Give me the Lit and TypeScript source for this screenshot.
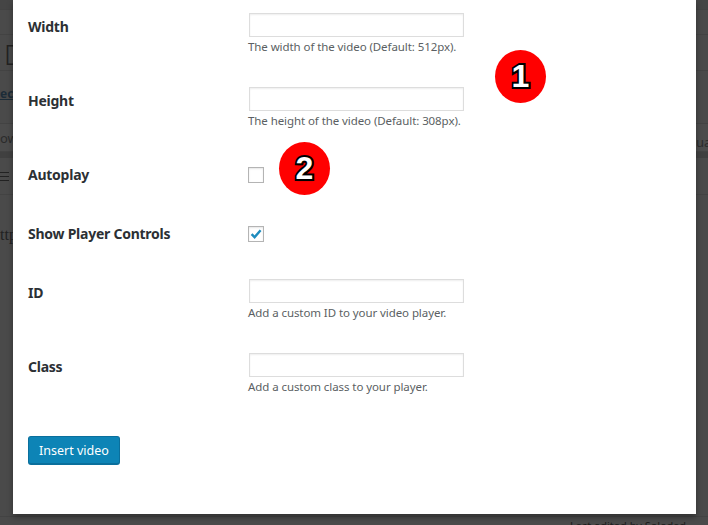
import { LitElement, html, css } from "lit";
import { customElement } from "lit/decorators.js";

@customElement("app-root")
export class AppRoot extends LitElement {
  static styles = css`
    :host { display: block; font-family: "Noto Sans", "Open Sans", sans-serif; }
    .page { position: relative; width: 708px; height: 525px; overflow: hidden; background: #4a4a4a; }
    .backdrop { display: flex; flex-direction: column; height: 525px; color: #1f1f1f; }
    .band { border-bottom: 1px solid #434343; flex: none; display: flex; justify-content: space-between; align-items: center; overflow: hidden; white-space: nowrap; }
    .b1 { height: 9px; background: #454545; }
    .b2 { height: 24px; }
    .b3 { height: 36px; box-sizing: border-box; font-size: 27px; font-weight: 300; color: #222; padding: 3px 0 0 4px; }
    .b4 { height: 53px; box-sizing: border-box; padding-bottom: 8px; font-size: 12px; font-weight: 700; color: #1c2c38; text-decoration: underline; }
    .b5 { height: 27px; font-size: 13px; color: #2b2b2b; background: #4c4c4c; }
    .b6 { height: 6px; background: #404040; border-bottom: 0; }
    .b7 { height: 36px; }
    .b8 { height: 319px; border-bottom: 0; font-family: "Liberation Serif", serif; font-size: 16px; color: #222; align-items: flex-start; padding-top: 31px; box-sizing: border-box; }
    .frag-r { width: 12px; overflow: hidden; padding-top: 8px; }
    .menu { display: flex; flex-direction: column; gap: 3px; }
    .menu i { display: block; width: 9px; height: 1px; background: #222; }
    .rule { position: absolute; left: 0; right: 0; top: 516px; height: 1px; background: #434343; }
    .foot { position: absolute; top: 518px; left: 570px; font-size: 11px; color: #1d1d1d; white-space: nowrap; }
    .modal { position: absolute; left: 13px; top: 0; width: 683px; height: 514px; box-sizing: border-box; background: #fff; padding: 13px 15px 0; box-shadow: 0 3px 6px rgba(0,0,0,.35); color: #32373c; }
    .row { display: grid; grid-template-columns: 220px 1fr; align-items: start; }
    .r74 { height: 74px; }
    .r59 { height: 59px; }
    .r83 { height: 83px; }
    .lab { font-size: 14px; font-weight: 700; line-height: 28px; letter-spacing: -0.25px; color: #2c3034; }
    .inp { display: block; box-sizing: border-box; width: 215px; height: 24px; margin: 0 0 0 1px; padding: 0; border: 1px solid #ddd; background: #fff; box-shadow: inset 0 1px 2px rgba(0,0,0,.07); outline: none; }
    .help { font-size: 11.5px; line-height: 16px; letter-spacing: -0.08px; margin: 2px 0 0; color: #5b5f63; }
    .cb { display: block; box-sizing: border-box; width: 16px; height: 16px; margin: 6px 0 0; border: 1px solid #b4b4b4; background: #fff; box-shadow: inset 0 1px 2px rgba(0,0,0,.1); }
    .cb svg { display: block; width: 14px; height: 14px; }
    .btn { display: block; box-sizing: border-box; width: 92px; height: 29px; padding: 0; font: 12.5px "Noto Sans", "Open Sans", sans-serif; color: #fff; background: #0d84b6; border: 1px solid #0a6f9c; border-bottom-width: 2px; border-radius: 3px; }
    .badge { position: absolute; width: 51px; height: 53px; border-radius: 50%; background: #f00; display: flex; align-items: center; justify-content: center; font: 700 32px "Liberation Sans", sans-serif; color: #fff; -webkit-text-stroke: 4px #000; paint-order: stroke fill; text-shadow: 1px 2px 1px rgba(0,0,0,.6); }
    .n1 { left: 495px; top: 50px; }
    .n2 { left: 279px; top: 142px; }
  `;

  private field(label: string, help: string) {
    return html`<div class="row r74">
      <div class="lab">${label}</div>
      <div><input class="inp" type="text" /><p class="help">${help}</p></div>
    </div>`;
  }

  render() {
    return html`<div class="page">
      <div class="backdrop">
        <div class="band b1"></div>
        <div class="band b2"></div>
        <div class="band b3"><span>D</span></div>
        <div class="band b4"><span>ec</span></div>
        <div class="band b5"><span>ow</span><span class="frag-r">ua</span></div>
        <div class="band b6"></div>
        <div class="band b7"><div class="menu"><i></i><i></i><i></i></div></div>
        <div class="band b8"><span>ttp</span></div>
      </div>
      <div class="rule"></div>
      <div class="foot">Last edited by Soledad</div>
      <div class="modal">
        ${this.field("Width", "The width of the video (Default: 512px).")}
        ${this.field("Height", "The height of the video (Default: 308px).")}
        <div class="row r59"><div class="lab">Autoplay</div><div class="cb"></div></div>
        <div class="row r59"><div class="lab">Show Player Controls</div><div class="cb">
          <svg viewBox="0 0 14 14"><path d="M2.6 7.2 L5.6 10.2 L11.6 3.2" fill="none" stroke="#1e8cbe" stroke-width="2.4"/></svg>
        </div></div>
        ${this.field("ID", "Add a custom ID to your video player.")}
        <div class="row r83">
          <div class="lab">Class</div>
          <div><input class="inp" type="text" /><p class="help">Add a custom class to your player.</p></div>
        </div>
        <button class="btn">Insert video</button>
      </div>
      <div class="badge n1">1</div>
      <div class="badge n2">2</div>
    </div>`;
  }
}
